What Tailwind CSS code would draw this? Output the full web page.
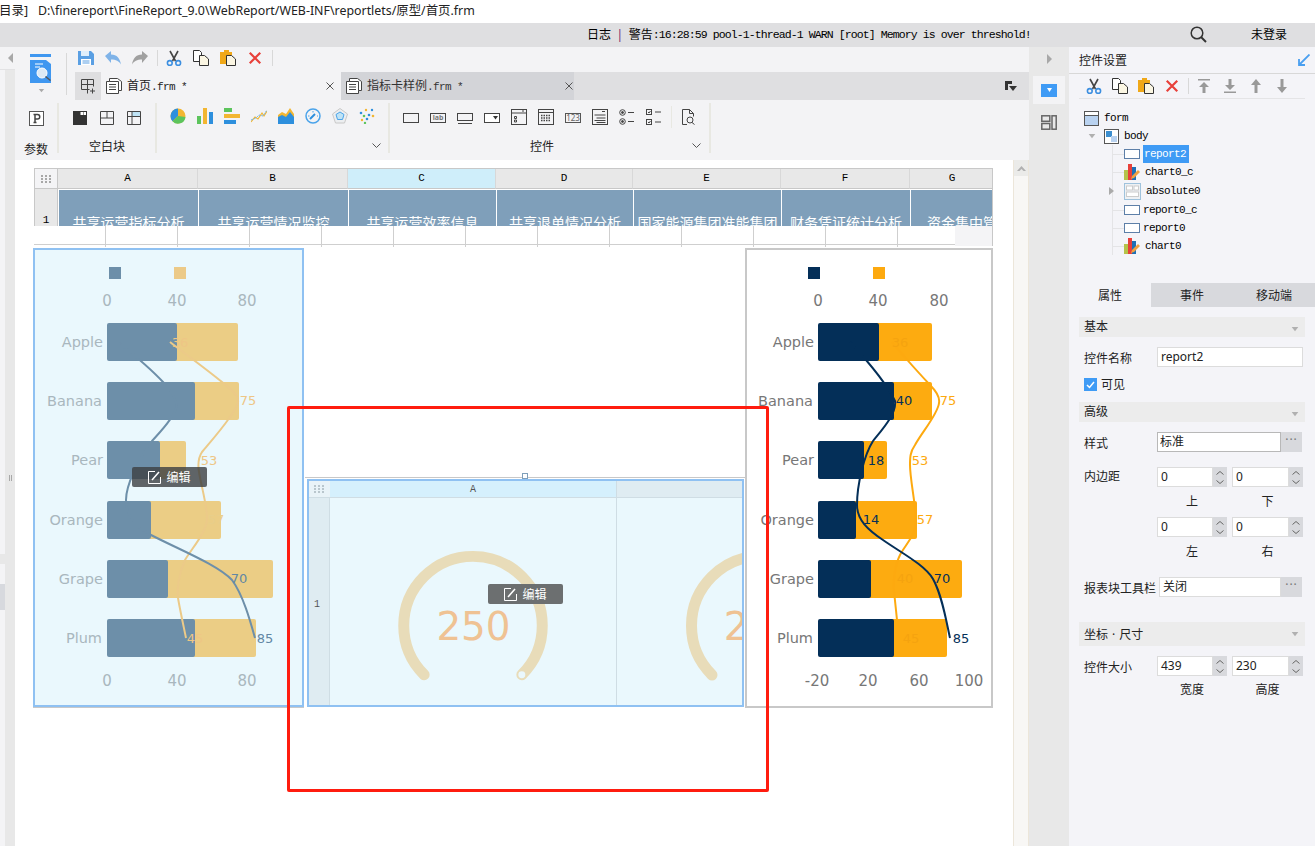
<!DOCTYPE html>
<html lang="zh-CN">
<head>
    <meta charset="UTF-8">
    <title>FineReport 9.0</title>
    <script src="https://cdn.jsdelivr.net/npm/@tailwindcss/browser@4"></script>
</head>
<body class="w-[1315px] h-[846px] overflow-hidden flex flex-col bg-white text-[12px] text-[#222] [font-family:'Noto_Sans','Noto_Sans_CJK_SC',sans-serif]">

    <!-- Shared icons -->
    <svg class="hidden">
        <symbol id="i-cut" viewBox="0 0 16 16">
            <path d="M4 1l5.5 10M12 1L6.5 11" stroke="#444" stroke-width="1.6" fill="none"/>
            <circle cx="3.8" cy="13" r="2.4" fill="none" stroke="#3d8fe0" stroke-width="1.6"/>
            <circle cx="12.2" cy="13" r="2.4" fill="none" stroke="#3d8fe0" stroke-width="1.6"/>
        </symbol>
        <symbol id="i-copy" viewBox="0 0 16 16">
            <path d="M.5.5h6l2 2v9h-8z" fill="#fff" stroke="#333"/>
            <path d="M6.5 5.5h5l4 3.5v6.500h-9z" fill="#fbf6e3" stroke="#333"/>
        </symbol>
        <symbol id="i-paste" viewBox="0 0 16 16">
            <path d="M0 2h4V0h5v2h3v4H7v8H0z" fill="#f0a818"/>
            <path d="M6.500 5.500h5l4 3.500v6.500h-9z" fill="#fbf6e3" stroke="#333"/>
        </symbol>
        <symbol id="i-del" viewBox="0 0 16 16">
            <path d="M2 2l12 12M14 2L2 14" stroke="#e8403a" stroke-width="2.500"/>
        </symbol>
        <symbol id="i-doc" viewBox="0 0 16 16">
            <path d="M3.500.5h8l4 3v9h-3v3H.5v-12h3z" fill="#fff" stroke="#444"/>
            <path d="M3.500 3.500h9v9" fill="none" stroke="#444"/>
            <path d="M3 6.500h7M3 9h7M3 11.500h7" stroke="#444"/>
        </symbol>
        <symbol id="i-report" viewBox="0 0 16 10">
            <rect x=".5" y=".5" width="15" height="9" fill="#fff" stroke="#5d7fa8"/>
        </symbol>
        <symbol id="i-chart" viewBox="0 0 16 16">
            <rect x="0" y="6" width="4" height="10" fill="#b5c34a"/>
            <rect x="4" y="0" width="4" height="16" fill="#e8403a"/>
            <rect x="8" y="3" width="4" height="13" fill="#1f6fb5"/>
            <path d="M7 15l1-3 6-6 2 2-6 6z" fill="#f0a040"/>
        </symbol>
        <symbol id="i-gauge-drop" viewBox="0 0 8 6">
            <path d="M0 0h8L4 5z" fill="currentColor"/>
        </symbol>
    </svg>

    <!-- Title bar -->
    <div class="h-[23px] shrink-0 flex items-center whitespace-nowrap text-[#222]">
        <span class="w-[39px] -ml-[1px] text-[12.5px]">目录]</span>
        <span class="text-[12.4px]">D:\finereport\FineReport_9.0\WebReport/WEB-INF\reportlets/原型/首页.frm</span>
    </div>

    <!-- Log bar -->
    <div class="h-[24px] shrink-0 bg-[#dfdfe1] flex items-center relative whitespace-nowrap">
        <span class="ml-[587px] text-[12px] text-black">日志<span class="text-[#7a1f6a] mx-[5.500px]">|</span>警告</span>
        <span class="text-black text-[11.500px] tracking-[-0.9px] [font-family:'Liberation_Mono',monospace]">:16:28:59 pool-1-thread-1 WARN [root] Memory is over threshold!</span>
        <svg class="absolute left-[1190px] top-[3px] w-[17px] h-[17px]" viewBox="0 0 17 17" fill="none" stroke="#333" stroke-width="1.500"><circle cx="7" cy="7" r="5.800"/><path d="M11 11l5 5" stroke-width="2"/></svg>
        <span class="absolute left-[1251px] top-[3px] text-[12px] text-black">未登录</span>
    </div>

    <div class="flex-1 flex min-h-0">
        <!-- Left collapsed panel -->
        <div class="w-[15px] shrink-0 flex flex-col">
            <div class="h-[23px] shrink-0 bg-[#f3f3f5] border-b border-[#e2e2e4] flex items-center justify-end pr-[2px]">
                <svg class="w-[5px] h-[10px]" viewBox="0 0 5 10"><path d="M5 0v10L0 5z" fill="#a8a8a8"/></svg>
            </div>
            <div class="flex-1 flex">
                <div class="w-[5px] flex flex-col bg-[#f4f4f6]">
                    <div class="h-[484px]"></div>
                    <div class="h-[10px] bg-[#e8e8e8]"></div>
                    <div class="h-[20px]"></div>
                    <div class="h-[26px] bg-[#d7d9de]"></div>
                </div>
                <div class="w-[10px] bg-[#e8e8e8] flex justify-center pt-[405px]">
                    <div class="w-[3px] h-[6px] border-x border-[#a8a8a8]"></div>
                </div>
            </div>
        </div>

        <!-- Centre column -->
        <div class="w-[1014px] shrink-0 flex flex-col">
            <!-- Quick bar and tabs -->
            <div class="h-[53px] shrink-0 flex bg-[#f3f3f5]">
                <div class="w-[60px] shrink-0 relative">
                    <svg class="absolute left-[15px] top-[7px] w-[22px] h-[29px]" viewBox="0 0 22 29">
                        <rect x="0" y="0" width="21" height="3" fill="#3f97f0"/>
                        <path d="M0 6h16l5 4v19H0z" fill="#3f97f0"/>
                        <path d="M5 10h8M5 13h5" stroke="#fff"/>
                        <circle cx="12" cy="19" r="5" fill="#dbe9f5" stroke="#fff"/>
                        <path d="M15.500 22.500l5 4" stroke="#555" stroke-width="1.500"/>
                    </svg>
                    <svg class="absolute left-[23px] top-[42px] w-[7px] h-[4px] text-[#aaa]"><use href="#i-gauge-drop"/></svg>
                    <div class="absolute right-[8px] top-[6px] h-[42px] w-px bg-[#d8d8d8]"></div>
                </div>
                <div class="flex-1 flex flex-col min-w-0">
                    <div class="h-[25px] shrink-0 flex items-center pl-[3px] gap-[11px] pb-[3px]">
                        <svg class="w-[16px] h-[16px]" viewBox="0 0 16 16"><path d="M0 1h13l3 3v11H0z" fill="#5a9fe3"/><rect x="3" y="1" width="8" height="5" fill="#dfeefb"/><rect x="3" y="9" width="10" height="6" fill="#fff"/><path d="M4.500 11h7M4.500 13h7" stroke="#5a9fe3"/></svg>
                        <svg class="w-[16px] h-[16px]" viewBox="0 0 16 16"><path d="M0 6l6-5v3.500c6 0 9 4 10 10-2-3.500-5-5-10-5V13z" fill="#7fb3e8"/></svg>
                        <svg class="w-[16px] h-[16px]" viewBox="0 0 16 16"><path d="M16 6l-6-5v3.500c-6 0-9 4-10 10 2-3.500 5-5 10-5V13z" fill="#a0a0a0"/></svg>
                        <div class="w-px h-[16px] ml-[-2px] bg-[#d8d8d8]"></div>
                        <svg class="w-[16px] h-[16px] ml-[-3px]"><use href="#i-cut"/></svg>
                        <svg class="w-[16px] h-[16px]"><use href="#i-copy"/></svg>
                        <svg class="w-[16px] h-[16px]"><use href="#i-paste"/></svg>
                        <svg class="w-[14px] h-[14px] ml-[1px]"><use href="#i-del"/></svg>
                        <div class="w-px h-[16px] ml-[-1px] bg-[#d8d8d8]"></div>
                    </div>
                    <div class="h-[28px] shrink-0 flex bg-[#dfdfe1] items-stretch">
                        <div class="w-[26px] flex items-center justify-center bg-[#dedee0]">
                            <svg class="w-[15px] h-[15px]" viewBox="0 0 15 15" fill="none" stroke="#444"><path d="M.5 10.500V.5h12v7M.5 5.500h12M6.500.5v14M.5 10.500h8M11.500 9.500v5M9 12h5"/></svg>
                        </div>
                        <div class="w-[240px] bg-[#f3f3f5] flex items-center pl-[5px] relative">
                            <svg class="w-[16px] h-[16px]"><use href="#i-doc"/></svg>
                            <span class="ml-[5px] whitespace-nowrap">首页<span class="text-[11px] tracking-[-0.6px] [font-family:'Liberation_Mono',monospace]">.frm *</span></span>
                            <svg class="absolute right-[7px] top-[10px] w-[8px] h-[8px]" viewBox="0 0 8 8"><path d="M.5.5l7 7M7.500.5l-7 7" stroke="#555"/></svg>
                        </div>
                        <div class="w-[233px] bg-[#d3d4d8] flex items-center pl-[5px] relative">
                            <svg class="w-[16px] h-[16px]"><use href="#i-doc"/></svg>
                            <span class="ml-[5px] whitespace-nowrap text-[#333]">指标卡样例<span class="text-[11px] tracking-[-0.6px] [font-family:'Liberation_Mono',monospace]">.frm *</span></span>
                            <svg class="absolute right-[1px] top-[10px] w-[8px] h-[8px]" viewBox="0 0 8 8"><path d="M.5.5l7 7M7.500.5l-7 7" stroke="#555"/></svg>
                        </div>
                        <div class="flex-1 flex items-center justify-end pr-[12px]">
                            <svg class="w-[12px] h-[11px]" viewBox="0 0 12 11"><path d="M0 0h7v3H3v6H0z" fill="#333"/><path d="M4 5h8l-4 5z" fill="#333"/></svg>
                        </div>
                    </div>
                </div>
            </div>

            <!-- Ribbon -->
            <div class="h-[60px] shrink-0 flex bg-[#f3f3f5] pt-[3px] whitespace-nowrap">
                <div class="w-[44px] h-[50px] border-r-2 border-[#e8e8e2] flex flex-col items-center">
                    <svg class="w-[15px] h-[15px] shrink-0 mt-[8px]" viewBox="0 0 15 15"><rect x=".5" y=".5" width="14" height="14" fill="#fff" stroke="#555"/><path d="M4.500 3.500h4a2 2 0 010 4.500h-2.500M6 3.500v8M4.500 11.500h3" fill="none" stroke="#444" stroke-width="1.500"/></svg>
                    <span class="mt-[15px] shrink-0">参数</span>
                </div>
                <div class="w-[98px] h-[50px] border-r-2 border-[#e8e8e2] flex flex-col">
                    <div class="flex gap-[13px] pl-[14px] mt-[8px]">
                        <svg class="w-[14px] h-[14px]" viewBox="0 0 14 14"><rect width="14" height="14" fill="#333"/><rect x="7.500" y="1" width="2.500" height="3" fill="#fff"/><rect x="10.500" y="1" width="2.500" height="3" fill="#fff"/></svg>
                        <svg class="w-[14px] h-[14px]" viewBox="0 0 14 14" fill="none" stroke="#444"><path d="M.5.5h13v13H.5zM.5 7h13M7 .5V7"/></svg>
                        <svg class="w-[14px] h-[14px]" viewBox="0 0 14 14" fill="none" stroke="#444"><rect x="5" y="1" width="8" height="5" fill="#bfe3f5" stroke="none"/><path d="M.5.5h13v13H.5zM.5 5.500h13M5 .5v13"/></svg>
                    </div>
                    <span class="mt-[13px] text-center">空白块</span>
                </div>
                <div class="w-[233px] h-[50px] border-r-2 border-[#e8e8e2] relative">
                    <div class="flex gap-[11px] pl-[13px] mt-[5px]">
                        <svg class="w-[16px] h-[16px]" viewBox="0 0 16 16"><circle cx="8" cy="8" r="7.500" fill="#f2b632"/><path d="M8 8V.5A7.500 7.500 0 00.5 8a7.500 7.500 0 002 5.300z" fill="#2d8fdd"/><path d="M8 8l-5.500 5.300A7.500 7.500 0 0015.500 9z" fill="#5cc45c"/></svg>
                        <svg class="w-[16px] h-[16px]" viewBox="0 0 16 16"><rect x="0" y="8" width="4" height="8" fill="#5cc45c"/><rect x="6" y="0" width="4" height="16" fill="#f2b632"/><rect x="12" y="4" width="4" height="12" fill="#2d8fdd"/></svg>
                        <svg class="w-[16px] h-[16px]" viewBox="0 0 16 16"><rect x="0" y="0" width="8" height="4" fill="#5cc45c"/><rect x="0" y="6" width="16" height="4" fill="#f2b632"/><rect x="0" y="12" width="12" height="4" fill="#2d8fdd"/></svg>
                        <svg class="w-[16px] h-[16px]" viewBox="0 0 16 16" fill="none"><path d="M0 14l4-5 3 2 4-6 2 3 3-5" stroke="#f2b632" stroke-width="1.200"/><path d="M0 12l5-2 3-3 4 1 4-6" stroke="#6bb4ec" stroke-width="1" stroke-dasharray="2 1"/></svg>
                        <svg class="w-[16px] h-[16px]" viewBox="0 0 16 16"><path d="M0 7l4-3 4 2 4-6 4 6v10H0z" fill="#f2b632"/><path d="M0 9l4-2 4 2 4-5 4 5v7H0z" fill="#2d8fdd"/></svg>
                        <svg class="w-[16px] h-[16px]" viewBox="0 0 16 16" fill="none"><circle cx="8" cy="8" r="7" stroke="#4aa3ea" stroke-width="1.500"/><path d="M5 11l5-5" stroke="#2d8fdd" stroke-width="2"/><path d="M3 8h1.500M8 3v1.500M12 8h1" stroke="#4aa3ea"/></svg>
                        <svg class="w-[16px] h-[16px]" viewBox="0 0 16 16" fill="none"><path d="M8 .5l7.500 5.500-3 9h-9l-3-9z" fill="#eceef0" stroke="#c8c8c8"/><path d="M8 4l4 2.500-1.500 5h-5L4 6.500z" fill="#bfe3f5" stroke="#4aa3ea"/></svg>
                        <svg class="w-[16px] h-[16px]" viewBox="0 0 16 16"><circle cx="2" cy="5" r="1.300" fill="#2d8fdd"/><circle cx="7" cy="2" r="1.200" fill="#f2b632"/><circle cx="13" cy="2" r="1.200" fill="#2d8fdd"/><circle cx="5" cy="8" r="1.300" fill="#5cc45c"/><circle cx="10" cy="7" r="1.300" fill="#2d8fdd"/><circle cx="14" cy="8" r="1.300" fill="#f2b632"/><circle cx="3" cy="12" r="1.200" fill="#f2b632"/><circle cx="8" cy="11" r="1.300" fill="#2d8fdd"/><circle cx="6" cy="15" r="1.200" fill="#5cc45c"/></svg>
                    </div>
                    <span class="absolute left-[95px] top-[35px]">图表</span>
                    <svg class="absolute left-[215px] top-[40px] w-[9px] h-[5px]" viewBox="0 0 9 5" fill="none"><path d="M.5.5l4 4 4-4" stroke="#555"/></svg>
                </div>
                <div class="w-[321px] h-[50px] border-r-2 border-[#e8e8e2] relative">
                    <div class="flex gap-[11px] pl-[13px] mt-[8px] items-start">
                        <svg class="w-[16px] h-[10px] mt-[2px]" viewBox="0 0 16 10" fill="none" stroke="#444"><rect x=".5" y=".5" width="15" height="9"/></svg>
                        <div class="w-[16px] h-[10px] mt-[2px] border border-[#444] text-[7px] leading-[8px] text-center text-[#777] font-bold">lab</div>
                        <svg class="w-[16px] h-[11px] mt-[2px]" viewBox="0 0 16 11" fill="none" stroke="#444"><rect x=".5" y=".5" width="15" height="7"/><path d="M1 10.500h14"/></svg>
                        <svg class="w-[16px] h-[10px] mt-[2px]" viewBox="0 0 16 10"><rect x=".5" y=".5" width="15" height="9" fill="#fff" stroke="#444"/><path d="M9 3h5l-2.500 3.500z" fill="#333"/></svg>
                        <svg class="w-[16px] h-[16px] -mt-[2px]" viewBox="0 0 16 16" fill="none" stroke="#444"><rect x=".5" y=".5" width="15" height="15"/><path d="M.5 4h15M11 2h2M3.500 7.500h2v2h-2zM3.500 11h2v2h-2z"/></svg>
                        <svg class="w-[16px] h-[16px] -mt-[2px]" viewBox="0 0 16 16" fill="none" stroke="#444"><rect x=".5" y=".5" width="15" height="15"/><path d="M.5 3.500h15"/><path d="M3 6.500h10M3 9h10M3 11.500h10" stroke-dasharray="1.500 1" stroke-width="1.500"/></svg>
                        <div class="w-[16px] h-[10px] mt-[2px] border border-[#555] text-[8px] leading-[8px] text-center text-[#666]">123</div>
                        <svg class="w-[16px] h-[16px] -mt-[2px]" viewBox="0 0 16 16" fill="none" stroke="#444"><rect x=".5" y=".5" width="15" height="15"/><path d="M10 2.500h3M2.500 6h11M4.500 9h9M2.500 11.500h11M4.500 13.500h9"/></svg>
                        <svg class="w-[16px] h-[16px] -mt-[2px]" viewBox="0 0 16 16" fill="none" stroke="#444"><circle cx="3.500" cy="3.500" r="2.800"/><circle cx="3.500" cy="3.500" r="1" fill="#444"/><circle cx="3.500" cy="12.500" r="2.800"/><circle cx="3.500" cy="12.500" r="1" fill="#444"/><path d="M9 3.500h6M9 12.500h6"/></svg>
                        <svg class="w-[16px] h-[16px] -mt-[2px]" viewBox="0 0 16 16" fill="none" stroke="#444"><rect x=".5" y=".5" width="5" height="5"/><rect x=".5" y="10.500" width="5" height="5"/><path d="M2 3l1 1 1.500-2M2 13l1 1 1.500-2M9 3h6M9 13h6"/></svg>
                        <div class="w-px h-[22px] -mt-[5px] ml-[-2px] bg-[#e8e8e2]"></div>
                        <svg class="w-[13px] h-[16px] -mt-[2px] ml-[-1px]" viewBox="0 0 13 16" fill="none" stroke="#444"><path d="M5 15.500H.5V.5h7l4 4v3M7.500.5v4h4"/><circle cx="8" cy="11" r="3"/><path d="M10 13.500l2.500 2"/></svg>
                    </div>
                    <span class="absolute left-[140px] top-[35px]">控件</span>
                    <svg class="absolute left-[302px] top-[40px] w-[9px] h-[5px]" viewBox="0 0 9 5" fill="none"><path d="M.5.5l4 4 4-4" stroke="#555"/></svg>
                </div>
            </div>

            <!-- Workspace -->
            <div class="flex-1 flex min-h-0">
                <!-- Design canvas: widgets sit at their form coordinates -->
                <div class="w-[998px] shrink-0 bg-white relative overflow-hidden">

                    <!-- Title sheet -->
                    <div class="absolute left-[19px] top-[8px] w-[959px] [font-family:'Liberation_Mono',monospace]">
                        <div class="grid grid-cols-[23px_140px_150px_148px_137px_148px_129px_84px] grid-rows-[20px_37px] border-t border-x border-[#c8c8c8] overflow-hidden">
                            <div class="bg-[#f4f4f6] border-b border-r border-[#c8c8c8] flex items-center justify-center">
                                <svg class="w-[11px] h-[8px]" viewBox="0 0 11 8" fill="#a8a8a8"><rect width="2" height="2"/><rect x="4" width="2" height="2"/><rect x="8" width="2" height="2"/><rect y="3" width="2" height="2"/><rect x="4" y="3" width="2" height="2"/><rect x="8" y="3" width="2" height="2"/><rect y="6" width="2" height="2"/><rect x="4" y="6" width="2" height="2"/><rect x="8" y="6" width="2" height="2"/></svg>
                            </div>
                            <div class="bg-[#e8e8e8] border-b border-r border-[#c8c8c8] border-r-[#d8d8d8] text-center leading-[19px] text-[11px] text-black">A</div>
                            <div class="bg-[#e8e8e8] border-b border-r border-[#c8c8c8] border-r-[#d8d8d8] text-center leading-[19px] text-[11px] text-black">B</div>
                            <div class="bg-[#cfeefa] border-b border-r border-[#c8c8c8] border-r-[#d8d8d8] text-center leading-[19px] text-[11px] text-black">C</div>
                            <div class="bg-[#e8e8e8] border-b border-r border-[#c8c8c8] border-r-[#d8d8d8] text-center leading-[19px] text-[11px] text-black">D</div>
                            <div class="bg-[#e8e8e8] border-b border-r border-[#c8c8c8] border-r-[#d8d8d8] text-center leading-[19px] text-[11px] text-black">E</div>
                            <div class="bg-[#e8e8e8] border-b border-r border-[#c8c8c8] border-r-[#d8d8d8] text-center leading-[19px] text-[11px] text-black">F</div>
                            <div class="bg-[#e8e8e8] border-b border-[#c8c8c8] text-center leading-[19px] text-[11px] text-black">G</div>

                            <div class="bg-[#e8e8e8] border-r border-[#c8c8c8] text-center pt-[22px] leading-[18px] text-[11px] text-black">1</div>
                            <div class="bg-[#7f9fba] border-l border-t border-white overflow-hidden text-white text-[14px] text-center whitespace-nowrap pt-[22px] leading-[20px] [font-family:'Noto_Sans_CJK_SC',sans-serif]">共享运营指标分析</div>
                            <div class="bg-[#7f9fba] border-l border-t border-white overflow-hidden text-white text-[14px] text-center whitespace-nowrap pt-[22px] leading-[20px] [font-family:'Noto_Sans_CJK_SC',sans-serif]">共享运营情况监控</div>
                            <div class="bg-[#7f9fba] border-l border-t border-white overflow-hidden text-white text-[14px] text-center whitespace-nowrap pt-[22px] leading-[20px] [font-family:'Noto_Sans_CJK_SC',sans-serif]">共享运营效率信息</div>
                            <div class="bg-[#7f9fba] border-l border-t border-white overflow-hidden text-white text-[14px] text-center whitespace-nowrap pt-[22px] leading-[20px] [font-family:'Noto_Sans_CJK_SC',sans-serif]">共享退单情况分析</div>
                            <div class="bg-[#7f9fba] border-l border-t border-white overflow-hidden text-white text-[14px] text-center whitespace-nowrap pt-[22px] leading-[20px] [font-family:'Noto_Sans_CJK_SC',sans-serif]">国家能源集团准能集团</div>
                            <div class="bg-[#7f9fba] border-l border-t border-white overflow-hidden text-white text-[14px] text-center whitespace-nowrap pt-[22px] leading-[20px] [font-family:'Noto_Sans_CJK_SC',sans-serif]">财务凭证统计分析</div>
                            <div class="bg-[#7f9fba] border-l border-t border-white overflow-hidden text-white text-[14px] whitespace-nowrap pl-[16px] pt-[22px] leading-[20px] [font-family:'Noto_Sans_CJK_SC',sans-serif]">资金集中管理</div>
                        </div>
                        <div class="flex h-[20px]">
                            <div class="w-[921px] h-[19px] border-b border-[#cfcfcf] flex">
                                <div class="w-[72px] h-[21px] border-r border-[#cfcfcf]"></div>
                                <div class="w-[72px] h-[21px] border-r border-[#cfcfcf]"></div>
                                <div class="w-[72px] h-[21px] border-r border-[#cfcfcf]"></div>
                                <div class="w-[72px] h-[21px] border-r border-[#cfcfcf]"></div>
                                <div class="w-[72px] h-[21px] border-r border-[#cfcfcf]"></div>
                                <div class="w-[72px] h-[21px] border-r border-[#cfcfcf]"></div>
                                <div class="w-[72px] h-[21px] border-r border-[#cfcfcf]"></div>
                                <div class="w-[72px] h-[21px] border-r border-[#cfcfcf]"></div>
                                <div class="w-[72px] h-[21px] border-r border-[#cfcfcf]"></div>
                                <div class="w-[72px] h-[21px] border-r border-[#cfcfcf]"></div>
                                <div class="w-[72px] h-[21px] border-r border-[#cfcfcf]"></div>
                                <div class="w-[72px] h-[21px] border-r border-[#cfcfcf]"></div>
                            </div>
                            <div class="w-[38px] bg-[#f4f4f6] border-r border-[#c8c8c8]"></div>
                        </div>
                    </div>

                    <!-- Selected-hover chart on the left -->
                    <div class="absolute left-[18px] top-[88px] w-[271px] h-[459px] border-2 border-[#8fc1f2] bg-[#eaf8fd] shadow-[0_1px_0_#c8c8c8]">
                        <svg class="w-[267px] h-[455px] block [font-family:'DejaVu_Sans',sans-serif]" viewBox="35 250 267 455">
                            <rect x="109" y="267" width="12" height="12" fill="#6d8fa9"/>
                            <rect x="174" y="267" width="12" height="12" fill="#ecca88"/>
                            <g fill="#a9b7be" font-size="15" text-anchor="middle">
                                <text x="107" y="306">0</text><text x="177" y="306">40</text><text x="247" y="306">80</text>
                                <text x="107" y="686">0</text><text x="177" y="686">40</text><text x="247" y="686">80</text>
                            </g>
                            <g fill="#a9b7be" font-size="14.500" text-anchor="end">
                                <text x="103" y="347">Apple</text><text x="102" y="406">Banana</text><text x="103" y="465">Pear</text>
                                <text x="103" y="525">Orange</text><text x="103" y="584">Grape</text><text x="102" y="643">Plum</text>
                            </g>
                            <g fill="#ebcd85">
                                <rect x="170" y="323" width="68" height="38" rx="2"/><rect x="190" y="382" width="49" height="38" rx="2"/>
                                <rect x="155" y="441" width="31" height="38" rx="2"/><rect x="145" y="501" width="76" height="38" rx="2"/>
                                <rect x="162" y="560" width="111" height="38" rx="2"/><rect x="190" y="619" width="66" height="38" rx="2"/>
                            </g>
                            <g fill="#6d8fa9">
                                <rect x="107" y="323" width="70" height="38" rx="2"/><rect x="107" y="382" width="88" height="38" rx="2"/>
                                <rect x="107" y="441" width="53" height="38" rx="2"/><rect x="107" y="501" width="44" height="38" rx="2"/>
                                <rect x="107" y="560" width="61" height="38" rx="2"/><rect x="107" y="619" width="88" height="38" rx="2"/>
                            </g>
                            <path d="M170 342C180 350 205 368 222 382C232 390 239 396 238 402C237 412 212 440 202 452C198 458 198 466 199 472C201 485 207 505 207 518C207 532 192 548 185 560C178 575 177 590 178 598C180 610 184 628 186 638" fill="none" stroke="#ecca88" stroke-width="2"/>
                            <path d="M118 342C128 350 150 368 163 382C172 392 178 402 176 408C174 418 160 432 152 441C138 460 126 485 126 500C126 518 138 528 151 535C180 550 218 565 232 580C243 595 250 620 255 638" fill="none" stroke="#6d8fa9" stroke-width="2"/>
                            <g font-size="13" text-anchor="middle" fill="#eec685">
                                <text x="180" y="347">36</text><text x="248" y="405">75</text><text x="209" y="465">53</text>
                                <text x="216" y="524" fill="#e8ce8a">57</text><text x="195" y="643">45</text>
                            </g>
                            <g font-size="13" text-anchor="middle" fill="#6287a4">
                                <text x="239" y="583">70</text><text x="265" y="643">85</text>
                            </g>
                        </svg>
                    </div>

                    <!-- Empty upper slot and the gauge sheet -->
                    <div class="absolute left-[290px] top-[88px] w-[440px] h-[230px] bg-white border-b border-[#c8c8c8]"></div>
                    <div class="absolute left-[292px] top-[319px] w-[437px] h-[228px] border-2 border-[#8fc1f2] bg-[#eaf8fd] flex flex-col overflow-hidden">
                        <div class="h-[17px] shrink-0 flex border-b border-[#cfdde4]">
                            <div class="w-[21px] bg-[#e9f3f8] flex items-center justify-center">
                                <svg class="w-[11px] h-[8px]" viewBox="0 0 11 8" fill="#b9c6cd"><rect width="2" height="2"/><rect x="4" width="2" height="2"/><rect x="8" width="2" height="2"/><rect y="3" width="2" height="2"/><rect x="4" y="3" width="2" height="2"/><rect x="8" y="3" width="2" height="2"/><rect y="6" width="2" height="2"/><rect x="4" y="6" width="2" height="2"/><rect x="8" y="6" width="2" height="2"/></svg>
                            </div>
                            <div class="w-[287px] bg-[#d5f0fd] border-r border-[#cfdde4] text-center text-[10px] leading-[17px] text-[#555] [font-family:'Liberation_Mono',monospace]">A</div>
                            <div class="flex-1 bg-[#dfecf2]"></div>
                        </div>
                        <div class="flex-1 flex min-h-0">
                            <div class="w-[21px] shrink-0 bg-[#dfecf2] border-r border-[#cfdde4] flex items-center pl-[5px] pt-[6px] text-[10px] text-[#555] [font-family:'Liberation_Mono',monospace]">1</div>
                            <svg class="w-[287px] h-[209px] block shrink-0 border-r border-[#cfdde4] [font-family:'DejaVu_Sans',sans-serif]" viewBox="330 498 287 209" fill="none">
                                <path d="M424.500 675A69.500 69.500 0 1 1 522.500 675" stroke="#e8dcb9" stroke-width="11" stroke-linecap="round"/>
                                <circle cx="522.500" cy="675" r="3.500" fill="#eaf8fd"/>
                                <text x="474" y="640" font-size="39" text-anchor="middle" fill="#efc293">250</text>
                            </svg>
                            <svg class="flex-1 h-[209px] block" viewBox="617 498 125 209" fill="none">
                                <path d="M712 675A69.500 69.500 0 1 1 810 675" stroke="#e8dcb9" stroke-width="11" stroke-linecap="round"/>
                                <text x="761" y="640" font-size="39" text-anchor="middle" fill="#efc293" class="[font-family:'DejaVu_Sans',sans-serif]">250</text>
                            </svg>
                        </div>
                    </div>
                    <div class="absolute left-[507px] top-[313px] w-[6px] h-[6px] bg-white border border-[#7f9fba]"></div>

                    <!-- Right chart -->
                    <div class="absolute left-[730px] top-[88px] w-[248px] h-[460px] border-2 border-[#c8c8c8] bg-white">
                        <svg class="w-[244px] h-[456px] block [font-family:'DejaVu_Sans',sans-serif]" viewBox="747 250 244 456">
                            <rect x="808" y="267" width="12" height="12" fill="#042f58"/>
                            <rect x="873" y="267" width="12" height="12" fill="#fda90f"/>
                            <g fill="#777" font-size="15" text-anchor="middle">
                                <text x="818" y="306">0</text><text x="878" y="306">40</text><text x="939" y="306">80</text>
                                <text x="817" y="686">-20</text><text x="868" y="686">20</text><text x="919" y="686">60</text><text x="969" y="686">100</text>
                            </g>
                            <g fill="#777" font-size="14.500" text-anchor="end">
                                <text x="814" y="347">Apple</text><text x="813" y="406">Banana</text><text x="814" y="465">Pear</text>
                                <text x="814" y="525">Orange</text><text x="814" y="584">Grape</text><text x="813" y="643">Plum</text>
                            </g>
                            <g fill="#fdab10">
                                <rect x="872" y="323" width="60" height="38" rx="2"/><rect x="888" y="382" width="44" height="38" rx="2"/>
                                <rect x="858" y="441" width="29" height="38" rx="2"/><rect x="850" y="501" width="67" height="38" rx="2"/>
                                <rect x="864" y="560" width="98" height="38" rx="2"/><rect x="888" y="619" width="59" height="38" rx="2"/>
                            </g>
                            <g fill="#042f58">
                                <rect x="818" y="323" width="61" height="38" rx="2"/><rect x="818" y="382" width="76" height="38" rx="2"/>
                                <rect x="818" y="441" width="46" height="38" rx="2"/><rect x="818" y="501" width="38" height="38" rx="2"/>
                                <rect x="818" y="560" width="53" height="38" rx="2"/><rect x="818" y="619" width="76" height="38" rx="2"/>
                            </g>
                            <path d="M892 342C900 352 918 372 930 385C937 392 940 398 939 403C938 414 922 432 915 445C910 452 910 458 910 465C910 480 916 505 916 522C916 535 905 545 900 555C895 565 893 580 894 592C895 600 896 610 897 620" fill="none" stroke="#fda90f" stroke-width="2"/>
                            <path d="M850 342C862 355 885 380 895 401C897 414 880 432 873 441C864 455 857 485 857 505C857 520 868 530 883 540C900 552 925 565 933 579C942 595 946 620 950 638" fill="none" stroke="#042f58" stroke-width="2"/>
                            <g font-size="13" text-anchor="middle" fill="#fda90f">
                                <text x="948" y="405">75</text><text x="920" y="465">53</text><text x="925" y="524">57</text>
                            </g>
                            <g font-size="13" text-anchor="middle" fill="#f5a30f">
                                <text x="900" y="347">36</text><text x="905" y="583">40</text><text x="911" y="643">45</text>
                            </g>
                            <g font-size="13" text-anchor="middle" fill="#042f58">
                                <text x="904" y="405">40</text><text x="876" y="465">18</text><text x="871" y="524">14</text>
                                <text x="942" y="583">70</text><text x="961" y="643">85</text>
                            </g>
                        </svg>
                    </div>

                    <!-- Edit buttons -->
                    <div class="absolute left-[117px] top-[307px] w-[75px] h-[20px] rounded-[2px] bg-[#3c3f41]/80 flex items-center justify-center gap-[5px] text-white">
                        <svg class="w-[13px] h-[13px]" viewBox="0 0 13 13" fill="none" stroke="#fff"><path d="M7 .5H.5v12h12V6"/><path d="M4 9l7-8" stroke-width="1.500"/></svg>
                        <span class="pt-[1px]">编辑</span>
                    </div>
                    <div class="absolute left-[473px] top-[424px] w-[75px] h-[20px] rounded-[2px] bg-[#6c6f70] flex items-center justify-center gap-[5px] text-white">
                        <svg class="w-[13px] h-[13px]" viewBox="0 0 13 13" fill="none" stroke="#fff"><path d="M7 .5H.5v12h12V6"/><path d="M4 9l7-8" stroke-width="1.500"/></svg>
                        <span class="pt-[1px]">编辑</span>
                    </div>

                    <!-- Red annotation box drawn over the screenshot -->
                    <div class="absolute left-[272px] top-[246px] w-[482px] h-[386px] border-[3px] border-[#ff1c0f] rounded-[2px]"></div>
                </div>

                <!-- Canvas scrollbar -->
                <div class="w-[16px] shrink-0 flex flex-col bg-[#f8f7f5] border-x border-[#ece6da]">
                    <div class="h-[16px] bg-[#ebebe9] flex items-center justify-center">
                        <svg class="w-[9px] h-[5px]" viewBox="0 0 9 5"><path d="M4.500 0L9 5H6.500L4.500 3 2.500 5H0z" fill="#b0b0b0"/></svg>
                    </div>
                </div>
            </div>
        </div>

        <!-- Right collapsed strip -->
        <div class="w-[40px] shrink-0 bg-[#e8e8e8] flex flex-col items-center relative">
            <svg class="mt-[7px] w-[5px] h-[10px] shrink-0" viewBox="0 0 5 10"><path d="M0 0v10l5-5z" fill="#a8a8a8"/></svg>
            <div class="mt-[12px] w-[32px] h-[28px] bg-[#f3f3f5] flex items-center justify-center">
                <div class="w-[16px] h-[13px] bg-[#3f9bf5] flex items-center justify-center">
                    <svg class="w-[5px] h-[4px]" viewBox="0 0 5 4"><path d="M0 0h5L2.500 4z" fill="#fff"/></svg>
                </div>
            </div>
            <svg class="mt-[11px] w-[16px] h-[15px]" viewBox="0 0 16 15" fill="none" stroke="#666" stroke-width="1.500"><rect x=".8" y=".8" width="8" height="5.500"/><rect x=".8" y="8.500" width="8" height="5.700"/><rect x="11" y=".8" width="4.200" height="13.400"/></svg>
        </div>

        <!-- Right panel -->
        <div class="w-[246px] shrink-0 bg-[#f4f4f8] flex flex-col">
            <div class="h-[27px] shrink-0 border-b border-[#d8d8d8] flex items-center pl-[10px] pr-[5px] justify-between">
                <span class="pt-[2px]">控件设置</span>
                <svg class="w-[12px] h-[12px]" viewBox="0 0 12 12" fill="none" stroke="#4a9ff0" stroke-width="1.800"><path d="M11.500.5L1 11M1 5v6h6"/></svg>
            </div>
            <div class="h-[25px] shrink-0 mx-[10px] border-b border-[#e4e4e6] flex items-center pl-[7px] gap-[10px]">
                <svg class="w-[16px] h-[16px]"><use href="#i-cut"/></svg>
                <svg class="w-[16px] h-[16px]"><use href="#i-copy"/></svg>
                <svg class="w-[16px] h-[16px]"><use href="#i-paste"/></svg>
                <svg class="w-[14px] h-[14px] ml-[1px]"><use href="#i-del"/></svg>
                <div class="w-px h-[16px] ml-[-1px] bg-[#d8d8d8]"></div>
                <svg class="w-[12px] h-[14px] ml-[-1px]" viewBox="0 0 12 14" fill="#999"><path d="M0 0h12v1.500H0zM6 3l5 5H7.500v6h-3V8H1z"/></svg>
                <svg class="w-[12px] h-[14px] ml-[4px]" viewBox="0 0 12 14" fill="#999"><path d="M0 12.500h12V14H0zM6 11L1 6h3.500V0h3v6H11z"/></svg>
                <svg class="w-[12px] h-[14px] ml-[4px]" viewBox="0 0 12 14" fill="#999"><path d="M6 0l5 6H7.500v8h-3V6H1z"/></svg>
                <svg class="w-[12px] h-[14px] ml-[4px]" viewBox="0 0 12 14" fill="#999"><path d="M6 14L1 8h3.500V0h3v8H11z"/></svg>
            </div>

            <!-- Widget tree -->
            <div class="h-[184px] shrink-0 pt-[10px] text-[11px] tracking-[-0.6px] text-black [font-family:'Liberation_Mono',monospace] relative">
                <div class="h-[18px] flex items-center pl-[15px]">
                    <svg class="w-[15px] h-[15px]" viewBox="0 0 15 15"><rect x=".5" y=".5" width="14" height="14" fill="#b9d2f0" stroke="#555"/><path d="M.5 4.500h14" stroke="#555"/><rect x="1" y="1" width="13" height="3" fill="#fff"/></svg>
                    <span class="ml-[5px]">form</span>
                </div>
                <div class="h-[18px] flex items-center pl-[19px]">
                    <svg class="w-[8px] h-[5px] text-[#b0b0b0]"><use href="#i-gauge-drop"/></svg>
                    <svg class="w-[15px] h-[15px] ml-[8px]" viewBox="0 0 15 15"><rect x=".5" y=".5" width="14" height="14" fill="#fff" stroke="#555"/><rect x="2" y="2" width="6" height="6" fill="#3d8fd0"/><rect x="7" y="7" width="6" height="6" fill="#b9d2f0"/></svg>
                    <span class="ml-[5px]">body</span>
                </div>
                <div class="ml-[43px] border-l border-[#e4e4e6]">
                    <div class="h-[18px] flex items-center">
                        <div class="w-[11px] h-px bg-[#e4e4e6]"></div>
                        <svg class="w-[16px] h-[10px]"><use href="#i-report"/></svg>
                        <span class="ml-[3px] h-[18px] leading-[18px] w-[46px] pl-[1px] bg-[#3f9bf5] text-white">report2</span>
                    </div>
                    <div class="h-[18px] flex items-center">
                        <div class="w-[11px] h-px bg-[#e4e4e6]"></div>
                        <svg class="w-[16px] h-[16px]"><use href="#i-chart"/></svg>
                        <span class="ml-[5px]">chart0_c</span>
                    </div>
                    <div class="h-[20px] flex items-center relative">
                        <svg class="absolute -left-[4px] top-[6px] w-[5px] h-[8px]" viewBox="0 0 5 8"><path d="M0 0v8l5-4z" fill="#aaa"/></svg>
                        <div class="w-[11px]"></div>
                        <svg class="w-[17px] h-[17px]" viewBox="0 0 17 17"><rect x=".5" y=".5" width="16" height="16" fill="#eef1f4" stroke="#9fc2dc"/><rect x="2.500" y="3" width="6" height="4" fill="#fff" stroke="#ccc"/><rect x="10" y="3" width="4.500" height="4" fill="#fff" stroke="#ccc"/><rect x="2.500" y="9" width="12" height="4.500" fill="#fff" stroke="#ccc"/></svg>
                        <span class="ml-[5px]">absolute0</span>
                    </div>
                    <div class="h-[18px] flex items-center">
                        <div class="w-[11px] h-px bg-[#e4e4e6]"></div>
                        <svg class="w-[16px] h-[10px]"><use href="#i-report"/></svg>
                        <span class="ml-[3px]">report0_c</span>
                    </div>
                    <div class="h-[18px] flex items-center">
                        <div class="w-[11px] h-px bg-[#e4e4e6]"></div>
                        <svg class="w-[16px] h-[10px]"><use href="#i-report"/></svg>
                        <span class="ml-[3px]">report0</span>
                    </div>
                    <div class="h-[18px] flex items-center">
                        <div class="w-[11px] h-px bg-[#e4e4e6]"></div>
                        <svg class="w-[16px] h-[16px]"><use href="#i-chart"/></svg>
                        <span class="ml-[5px]">chart0</span>
                    </div>
                </div>
            </div>

            <!-- Property tabs -->
            <div class="h-[24px] shrink-0 flex text-center leading-[26px]">
                <div class="w-[82px] bg-[#f4f4f8]">属性</div>
                <div class="w-[82px] bg-[#d8d9dd]">事件</div>
                <div class="w-[82px] bg-[#d8d9dd]">移动端</div>
            </div>

            <!-- Properties -->
            <div class="px-[10px] pt-[10px]">
                <div class="h-[20px] bg-[#ececec] pl-[5px] pr-[5px] flex items-center justify-between">
                    <span>基本</span>
                    <svg class="w-[8px] h-[5px] mt-[4px] mr-[1px] text-[#b0b0b0]"><use href="#i-gauge-drop"/></svg>
                </div>
                <div class="mt-[10px] h-[20px] flex items-center">
                    <span class="w-[78px] pl-[5px] pt-[3px]">控件名称</span>
                    <div class="w-[146px] h-[20px] bg-white border border-[#dcdcdc] pl-[3px] leading-[18px]">report2</div>
                </div>
                <div class="mt-[11px] h-[13px] flex items-center pl-[5px]">
                    <div class="w-[13px] h-[13px] bg-[#3f9bf5] flex items-center justify-center">
                        <svg class="w-[9px] h-[8px]" viewBox="0 0 9 8" fill="none"><path d="M1 4l2.500 2.500L8 1" stroke="#fff" stroke-width="1.500"/></svg>
                    </div>
                    <span class="ml-[4px]">可见</span>
                </div>
                <div class="mt-[11px] h-[20px] bg-[#ececec] pl-[5px] pr-[5px] flex items-center justify-between">
                    <span>高级</span>
                    <svg class="w-[8px] h-[5px] mt-[4px] mr-[1px] text-[#b0b0b0]"><use href="#i-gauge-drop"/></svg>
                </div>
                <div class="mt-[10px] h-[20px] flex items-center">
                    <span class="w-[78px] pl-[5px] pt-[3px]">样式</span>
                    <div class="w-[124px] h-[20px] bg-white border border-[#b8b8b8] pl-[2px] leading-[18px]">标准</div>
                    <div class="w-[21px] h-[20px] bg-[#d8d9dd] text-center text-[#777] leading-[16px] tracking-[1px]">···</div>
                </div>
                <div class="mt-[15px] h-[20px] flex items-center">
                    <span class="w-[78px] pl-[5px]">内边距</span>
                    <div class="w-[70px] h-[20px] flex">
                        <div class="flex-1 bg-white border border-[#dcdcdc] pl-[3px] leading-[18px]">0</div>
                        <div class="w-[14px] bg-[#d8d9dd] flex flex-col items-center justify-center gap-[5px]">
                            <svg class="w-[8px] h-[4px]" viewBox="0 0 8 4" fill="none"><path d="M.5 3.500L4 .5l3.500 3" stroke="#666"/></svg>
                            <svg class="w-[8px] h-[4px]" viewBox="0 0 8 4" fill="none"><path d="M.5.5L4 3.500 7.500.5" stroke="#666"/></svg>
                        </div>
                    </div>
                    <div class="w-[71px] ml-[5px] h-[20px] flex">
                        <div class="flex-1 bg-white border border-[#dcdcdc] pl-[3px] leading-[18px]">0</div>
                        <div class="w-[14px] bg-[#d8d9dd] flex flex-col items-center justify-center gap-[5px]">
                            <svg class="w-[8px] h-[4px]" viewBox="0 0 8 4" fill="none"><path d="M.5 3.500L4 .5l3.500 3" stroke="#666"/></svg>
                            <svg class="w-[8px] h-[4px]" viewBox="0 0 8 4" fill="none"><path d="M.5.5L4 3.500 7.500.5" stroke="#666"/></svg>
                        </div>
                    </div>
                </div>
                <div class="mt-[6px] h-[16px] flex pl-[78px] leading-[18px] text-center">
                    <span class="w-[70px]">上</span>
                    <span class="w-[71px] ml-[5px]">下</span>
                </div>
                <div class="mt-[8px] h-[20px] flex items-center pl-[78px]">
                    <div class="w-[70px] h-[20px] flex">
                        <div class="flex-1 bg-white border border-[#dcdcdc] pl-[3px] leading-[18px]">0</div>
                        <div class="w-[14px] bg-[#d8d9dd] flex flex-col items-center justify-center gap-[5px]">
                            <svg class="w-[8px] h-[4px]" viewBox="0 0 8 4" fill="none"><path d="M.5 3.500L4 .5l3.500 3" stroke="#666"/></svg>
                            <svg class="w-[8px] h-[4px]" viewBox="0 0 8 4" fill="none"><path d="M.5.5L4 3.500 7.500.5" stroke="#666"/></svg>
                        </div>
                    </div>
                    <div class="w-[71px] ml-[5px] h-[20px] flex">
                        <div class="flex-1 bg-white border border-[#dcdcdc] pl-[3px] leading-[18px]">0</div>
                        <div class="w-[14px] bg-[#d8d9dd] flex flex-col items-center justify-center gap-[5px]">
                            <svg class="w-[8px] h-[4px]" viewBox="0 0 8 4" fill="none"><path d="M.5 3.500L4 .5l3.500 3" stroke="#666"/></svg>
                            <svg class="w-[8px] h-[4px]" viewBox="0 0 8 4" fill="none"><path d="M.5.5L4 3.500 7.500.5" stroke="#666"/></svg>
                        </div>
                    </div>
                </div>
                <div class="mt-[6px] h-[16px] flex pl-[78px] leading-[18px] text-center">
                    <span class="w-[70px]">左</span>
                    <span class="w-[71px] ml-[5px]">右</span>
                </div>
                <div class="mt-[18px] h-[20px] flex items-center">
                    <span class="w-[80px] pl-[5px] pt-[3px] whitespace-nowrap">报表块工具栏</span>
                    <div class="w-[122px] h-[20px] bg-white border border-[#dcdcdc] pl-[3px] leading-[18px]">关闭</div>
                    <div class="w-[21px] h-[20px] bg-[#d8d9dd] text-center text-[#777] leading-[16px] tracking-[1px]">···</div>
                </div>
                <div class="mt-[25px] h-[24px] bg-[#ececec] pl-[5px] pr-[5px] flex items-center justify-between">
                    <span class="pt-[2px]">坐标<span class="mx-[4px]">·</span>尺寸</span>
                    <svg class="w-[8px] h-[5px] mr-[1px] text-[#b0b0b0]"><use href="#i-gauge-drop"/></svg>
                </div>
                <div class="mt-[10px] h-[20px] flex items-center">
                    <span class="w-[78px] pl-[5px] pt-[3px]">控件大小</span>
                    <div class="w-[70px] h-[20px] flex">
                        <div class="flex-1 bg-white border border-[#dcdcdc] pl-[3px] leading-[18px]">439</div>
                        <div class="w-[14px] bg-[#d8d9dd] flex flex-col items-center justify-center gap-[5px]">
                            <svg class="w-[8px] h-[4px]" viewBox="0 0 8 4" fill="none"><path d="M.5 3.500L4 .5l3.500 3" stroke="#666"/></svg>
                            <svg class="w-[8px] h-[4px]" viewBox="0 0 8 4" fill="none"><path d="M.5.5L4 3.500 7.500.5" stroke="#666"/></svg>
                        </div>
                    </div>
                    <div class="w-[71px] ml-[5px] h-[20px] flex">
                        <div class="flex-1 bg-white border border-[#dcdcdc] pl-[3px] leading-[18px]">230</div>
                        <div class="w-[14px] bg-[#d8d9dd] flex flex-col items-center justify-center gap-[5px]">
                            <svg class="w-[8px] h-[4px]" viewBox="0 0 8 4" fill="none"><path d="M.5 3.500L4 .5l3.500 3" stroke="#666"/></svg>
                            <svg class="w-[8px] h-[4px]" viewBox="0 0 8 4" fill="none"><path d="M.5.5L4 3.500 7.500.5" stroke="#666"/></svg>
                        </div>
                    </div>
                </div>
                <div class="mt-[5px] h-[16px] flex pl-[78px] leading-[18px] text-center">
                    <span class="w-[70px]">宽度</span>
                    <span class="w-[71px] ml-[5px]">高度</span>
                </div>
            </div>
        </div>
    </div>
</body>
</html>
